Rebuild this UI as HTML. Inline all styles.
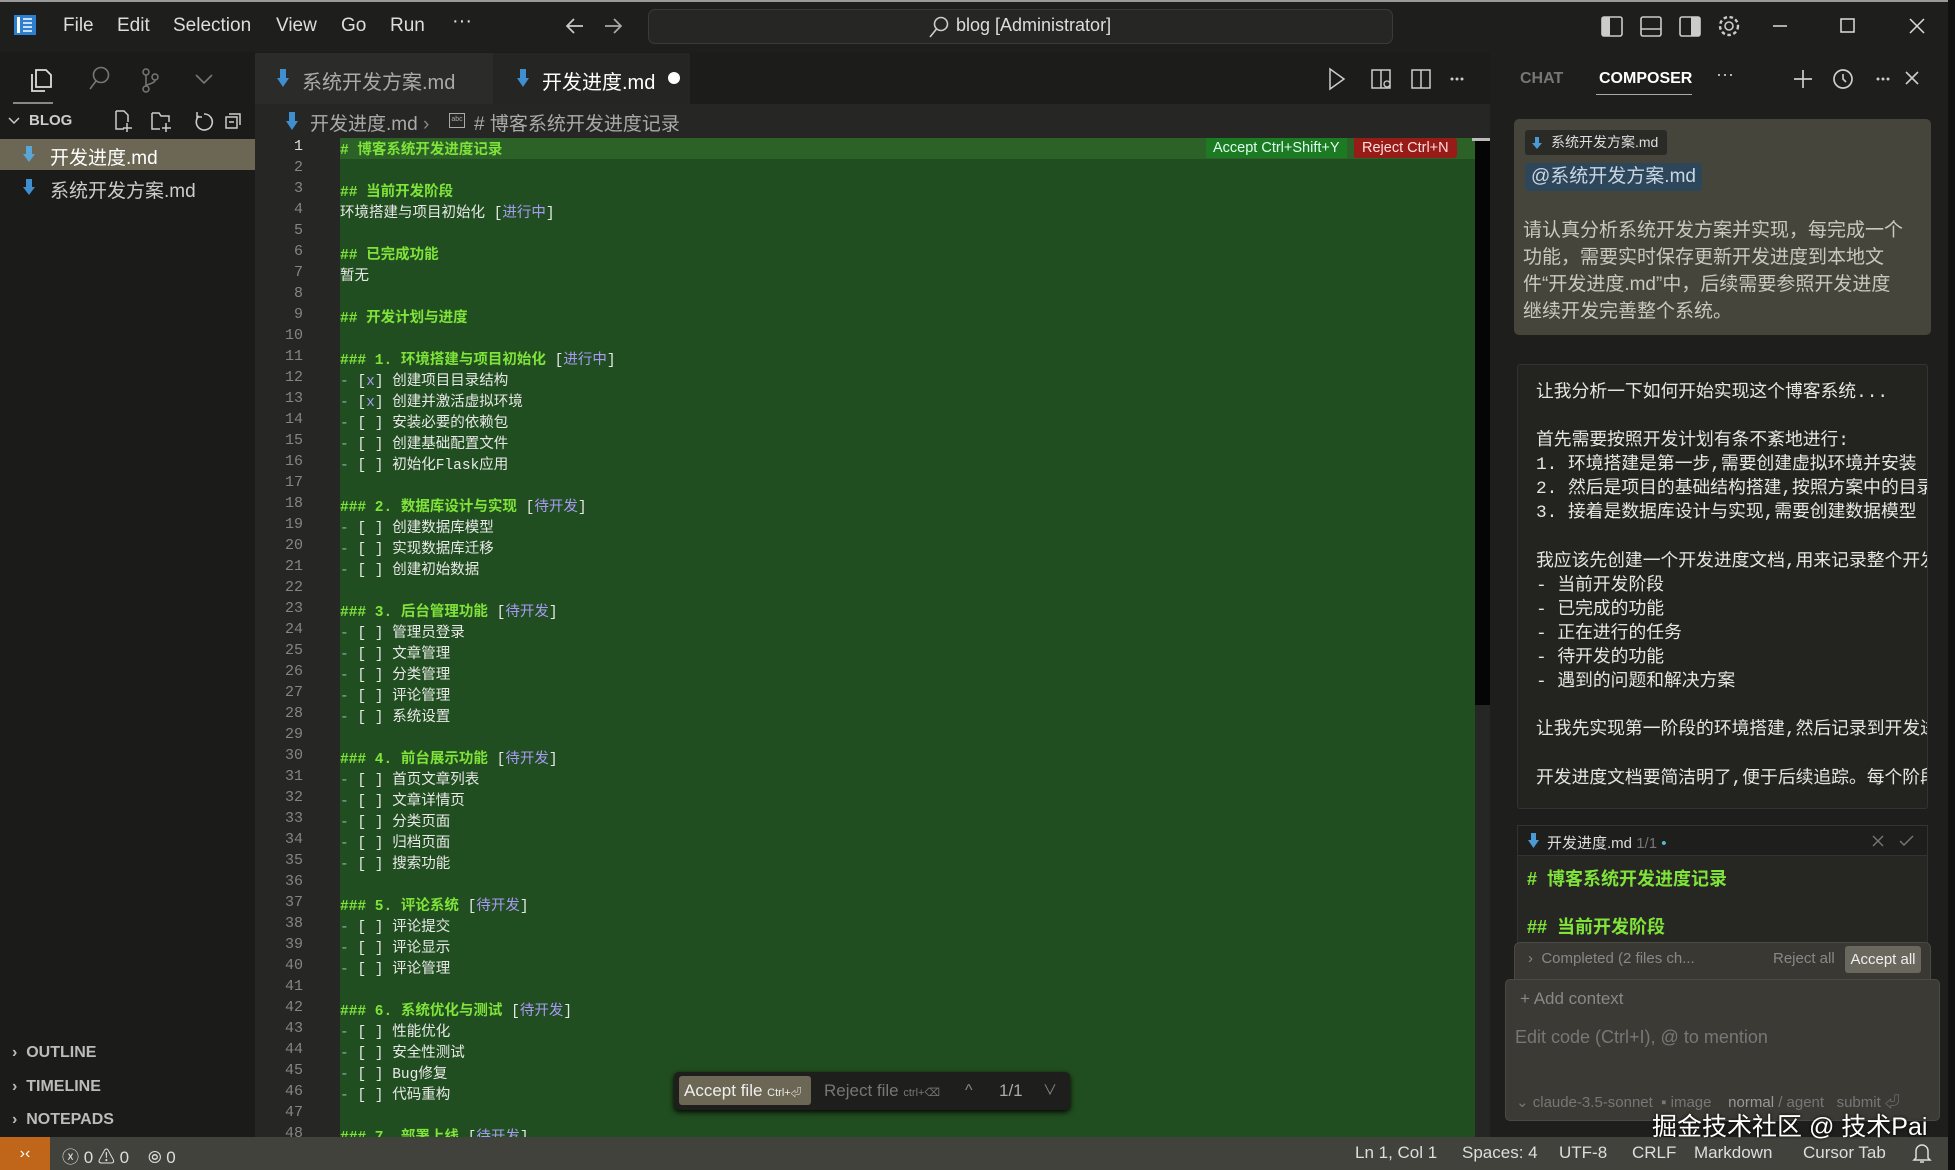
<!DOCTYPE html>
<html><head><meta charset="utf-8">
<style>
*{margin:0;padding:0;box-sizing:border-box}
body{width:1955px;height:1170px;overflow:hidden;background:#1c1c1b;font-family:"Liberation Sans","Noto Sans CJK SC",sans-serif;color:#ccc;position:relative}
.a{position:absolute}
.mono{font-family:"Liberation Mono","Noto Sans CJK SC",monospace}
.t{white-space:nowrap}
svg{position:absolute}
.ln{position:absolute;left:255px;width:48px;text-align:right;font-size:15px;color:#858585;font-family:"Liberation Mono",monospace}
.cl{position:absolute;left:340px;font-size:14.5px;color:#e8e8e8;white-space:nowrap;font-family:"Liberation Mono","Noto Sans CJK SC",monospace}
.h{color:#7fe33a;font-weight:bold}
.p{color:#a99bf5}
.g{color:#9aa}
</style></head><body>
<div class="a" style="left:0;top:0;width:1955px;height:2px;background:#9a9a9a"></div>
<div class="a" style="left:0;top:2px;width:1955px;height:50px;background:#1e1e1d"></div>
<svg style="left:12px;top:13px" width="26" height="24"><rect x="2" y="2" width="22" height="20" fill="#2d7fd0"/><rect x="5" y="4" width="3" height="16" fill="#fff"/><path d="M11 6h9M11 10h9M11 14h9M11 18h9" stroke="#fff" stroke-width="1.6"/></svg>
<div class="a t" style="left:63px;top:15px;font-size:19px;color:#ddd">File</div>
<div class="a t" style="left:117px;top:15px;font-size:19px;color:#ddd">Edit</div>
<div class="a t" style="left:173px;top:15px;font-size:19px;color:#ddd">Selection</div>
<div class="a t" style="left:276px;top:15px;font-size:19px;color:#ddd">View</div>
<div class="a t" style="left:341px;top:15px;font-size:19px;color:#ddd">Go</div>
<div class="a t" style="left:390px;top:15px;font-size:19px;color:#ddd">Run</div>
<div class="a t" style="left:452px;top:10px;font-size:20px;color:#ddd">···</div>
<svg style="left:563px;top:14px" width="70" height="24"><path d="M20 12H4M11 5 4 12l7 7" stroke="#ccc" stroke-width="1.7" fill="none"/><path d="M42 12h16M51 5l7 7-7 7" stroke="#aaa" stroke-width="1.7" fill="none"/></svg>
<div class="a" style="left:648px;top:9px;width:745px;height:35px;border:1px solid #3a3a3a;border-radius:7px;background:#262624"></div>
<svg style="left:928px;top:15px" width="22" height="24"><circle cx="13" cy="9" r="6.5" stroke="#ccc" stroke-width="1.6" fill="none"/><path d="M8.5 14 2 22" stroke="#ccc" stroke-width="1.6"/></svg>
<div class="a t" style="left:956px;top:15px;font-size:18px;color:#ddd">blog [Administrator]</div>
<svg style="left:1600px;top:14px" width="230" height="26"><rect x="2" y="3" width="20" height="19" rx="2" stroke="#ccc" stroke-width="1.6" fill="none"/><rect x="2" y="3" width="8" height="19" fill="#ccc"/><rect x="41" y="3" width="20" height="19" rx="2" stroke="#ccc" stroke-width="1.6" fill="none"/><path d="M41 15h20" stroke="#ccc" stroke-width="1.6"/><rect x="80" y="3" width="20" height="19" rx="2" stroke="#ccc" stroke-width="1.6" fill="none"/><rect x="91" y="3" width="9" height="19" fill="#ccc"/><circle cx="129" cy="12" r="4" stroke="#ccc" stroke-width="1.6" fill="none"/><circle cx="129" cy="12" r="9" stroke="#ccc" stroke-width="2.4" stroke-dasharray="3.5 2.6" fill="none"/></svg>
<svg style="left:1770px;top:14px" width="180" height="26"><path d="M3 12h14" stroke="#ddd" stroke-width="1.5"/><rect x="71" y="5" width="13" height="13" stroke="#ddd" stroke-width="1.5" fill="none"/><path d="M140 5l14 14M154 5l-14 14" stroke="#ddd" stroke-width="1.5"/></svg>

<div class="a" style="left:0;top:52px;width:255px;height:1085px;background:#1b1b1a"></div>
<svg style="left:28px;top:64px" width="200" height="32"><path d="M8 6h10l5 5v12H8z" stroke="#ddd" stroke-width="1.8" fill="none"/><path d="M4 10v17h13" stroke="#ddd" stroke-width="1.8" fill="none"/><circle cx="73" cy="11" r="7.5" stroke="#777" stroke-width="1.6" fill="none"/><path d="M68 17l-6 8" stroke="#777" stroke-width="1.6"/><circle cx="118" cy="8" r="3" stroke="#777" stroke-width="1.5" fill="none"/><circle cx="118" cy="25" r="3" stroke="#777" stroke-width="1.5" fill="none"/><circle cx="127" cy="13" r="3" stroke="#777" stroke-width="1.5" fill="none"/><path d="M118 11v11M127 16c0 4-9 4-9 6" stroke="#777" stroke-width="1.5" fill="none"/><path d="M168 11l8 8 8-8" stroke="#777" stroke-width="1.6" fill="none"/></svg>
<div class="a" style="left:13px;top:102px;width:40px;height:2px;background:#888"></div>
<svg style="left:6px;top:113px" width="16" height="16"><path d="M3 5l5 5 5-5" stroke="#ccc" stroke-width="1.5" fill="none"/></svg>
<div class="a t" style="left:29px;top:112px;font-size:15px;font-weight:bold;color:#ccc">BLOG</div>
<svg style="left:112px;top:108px" width="135" height="26"><path d="M4 3h8l4 4v7M4 3v18h8" stroke="#ccc" stroke-width="1.5" fill="none"/><path d="M15 15v9M11 20h9" stroke="#ccc" stroke-width="1.5"/><path d="M40 5h7l2 3h8v6M40 5v16h8" stroke="#ccc" stroke-width="1.5" fill="none"/><path d="M54 15v9M50 20h9" stroke="#ccc" stroke-width="1.5"/><path d="M92 6a8 8 0 1 1-5 2" stroke="#ccc" stroke-width="1.6" fill="none"/><path d="M85 4v5h5" stroke="#ccc" stroke-width="1.5" fill="none"/><rect x="114" y="9" width="11" height="11" stroke="#ccc" stroke-width="1.5" fill="none"/><path d="M117 6h11v11M117 14h5" stroke="#ccc" stroke-width="1.5" fill="none"/></svg>
<div class="a" style="left:0;top:139px;width:255px;height:31px;background:#6b6754"></div>
<svg style="left:22px;top:145px" width="14" height="18"><path d="M4 1h6v8h3L7 17 1 9h3z" fill="#5aa6d6"/></svg>
<div class="a t" style="left:50px;top:143px;font-size:19px;color:#fff">开发进度.md</div>
<svg style="left:22px;top:178px" width="14" height="18"><path d="M4 1h6v8h3L7 17 1 9h3z" fill="#3f8fd0"/></svg>
<div class="a t" style="left:50px;top:176px;font-size:19px;color:#ccc">系统开发方案.md</div>
<div class="a t" style="left:12px;top:1044px;font-size:16px;font-weight:bold;color:#bbb">›&nbsp; OUTLINE</div>
<div class="a t" style="left:12px;top:1078px;font-size:16px;font-weight:bold;color:#bbb">›&nbsp; TIMELINE</div>
<div class="a t" style="left:12px;top:1111px;font-size:16px;font-weight:bold;color:#bbb">›&nbsp; NOTEPADS</div>

<div class="a" style="left:255px;top:52px;width:1235px;height:52px;background:#1c1c1b"></div>
<div class="a" style="left:255px;top:53px;width:238px;height:52px;background:#2b2b29"></div>
<div class="a" style="left:493px;top:53px;width:197px;height:52px;background:#252523"></div>
<svg style="left:276px;top:68px" width="14" height="20"><path d="M4 1h6v9h3L7 19 1 10h3z" fill="#3f8fd0"/></svg>
<div class="a t" style="left:302px;top:66px;font-size:20px;color:#aaa">系统开发方案.md</div>
<svg style="left:516px;top:68px" width="14" height="20"><path d="M4 1h6v9h3L7 19 1 10h3z" fill="#3f8fd0"/></svg>
<div class="a t" style="left:542px;top:66px;font-size:20px;color:#fff">开发进度.md</div>
<div class="a" style="left:668px;top:72px;width:12px;height:12px;border-radius:50%;background:#fff"></div>
<svg style="left:1325px;top:66px" width="160" height="26"><path d="M5 3l14 10-14 10z" stroke="#ccc" stroke-width="1.5" fill="none"/><rect x="47" y="4" width="18" height="18" stroke="#ccc" stroke-width="1.5" fill="none"/><path d="M56 4v18" stroke="#ccc" stroke-width="1.5"/><circle cx="62" cy="18" r="3" stroke="#ccc" stroke-width="1.3" fill="#1c1c1b"/><rect x="87" y="4" width="18" height="18" stroke="#ccc" stroke-width="1.5" fill="none"/><path d="M96 4v18" stroke="#ccc" stroke-width="1.5"/><circle cx="127" cy="13" r="1.5" fill="#ccc"/><circle cx="132" cy="13" r="1.5" fill="#ccc"/><circle cx="137" cy="13" r="1.5" fill="#ccc"/></svg>
<div class="a" style="left:255px;top:104px;width:1235px;height:34px;background:#262624"></div>
<svg style="left:285px;top:111px" width="14" height="20"><path d="M4 1h6v9h3L7 19 1 10h3z" fill="#3f8fd0"/></svg>
<div class="a t" style="left:310px;top:109px;font-size:19px;color:#aaa">开发进度.md <span style="color:#888">›</span></div>
<div class="a" style="left:449px;top:113px;width:16px;height:15px;border:1.5px solid #aaa;font-size:7px;color:#aaa;line-height:11px;text-align:center">abc</div>
<div class="a t" style="left:474px;top:109px;font-size:19px;color:#aaa"># 博客系统开发进度记录</div>

<div class="a" style="left:255px;top:138px;width:85px;height:999px;background:#262624"></div>
<div class="a" style="left:340px;top:138px;width:1135px;height:999px;background:#214e20"></div>
<div class="a" style="left:340px;top:138px;width:1135px;height:21px;background:#2c6228"></div>
<div class="a" style="left:1475px;top:138px;width:15px;height:999px;background:#050505"></div>
<div class="a" style="left:1472px;top:138px;width:18px;height:3px;background:#bbb"></div>
<div class="a" style="left:1475px;top:705px;width:15px;height:432px;background:#262624"></div>
<div class="a t" style="left:1206px;top:138px;height:20px;padding:0 7px;background:#1c7a22;color:#dfe;font-size:14.5px;line-height:20px">Accept Ctrl+Shift+Y</div>
<div class="a t" style="left:1354px;top:138px;height:20px;padding:0 8px;background:#971b17;color:#fdd;font-size:14.5px;line-height:20px;border-radius:0 3px 3px 0">Reject Ctrl+N</div>

<div class="ln" style="top:138px;color:#ddd">1</div><div class="cl h" style="top:138px"># 博客系统开发进度记录</div>
<div class="ln" style="top:159px">2</div>
<div class="ln" style="top:180px">3</div><div class="cl h" style="top:180px">## 当前开发阶段</div>
<div class="ln" style="top:201px">4</div><div class="cl" style="top:201px">环境搭建与项目初始化 [<span class="p">进行中</span>]</div>
<div class="ln" style="top:222px">5</div>
<div class="ln" style="top:243px">6</div><div class="cl h" style="top:243px">## 已完成功能</div>
<div class="ln" style="top:264px">7</div><div class="cl" style="top:264px">暂无</div>
<div class="ln" style="top:285px">8</div>
<div class="ln" style="top:306px">9</div><div class="cl h" style="top:306px">## 开发计划与进度</div>
<div class="ln" style="top:327px">10</div>
<div class="ln" style="top:348px">11</div><div class="cl" style="top:348px"><span class="h">### 1. 环境搭建与项目初始化 </span>[<span class="p">进行中</span>]</div>
<div class="ln" style="top:369px">12</div><div class="cl" style="top:369px"><span class="g">-</span> [<span class="p">x</span>] 创建项目目录结构</div>
<div class="ln" style="top:390px">13</div><div class="cl" style="top:390px"><span class="g">-</span> [<span class="p">x</span>] 创建并激活虚拟环境</div>
<div class="ln" style="top:411px">14</div><div class="cl" style="top:411px"><span class="g">-</span> [ ] 安装必要的依赖包</div>
<div class="ln" style="top:432px">15</div><div class="cl" style="top:432px"><span class="g">-</span> [ ] 创建基础配置文件</div>
<div class="ln" style="top:453px">16</div><div class="cl" style="top:453px"><span class="g">-</span> [ ] 初始化Flask应用</div>
<div class="ln" style="top:474px">17</div>
<div class="ln" style="top:495px">18</div><div class="cl" style="top:495px"><span class="h">### 2. 数据库设计与实现 </span>[<span class="p">待开发</span>]</div>
<div class="ln" style="top:516px">19</div><div class="cl" style="top:516px"><span class="g">-</span> [ ] 创建数据库模型</div>
<div class="ln" style="top:537px">20</div><div class="cl" style="top:537px"><span class="g">-</span> [ ] 实现数据库迁移</div>
<div class="ln" style="top:558px">21</div><div class="cl" style="top:558px"><span class="g">-</span> [ ] 创建初始数据</div>
<div class="ln" style="top:579px">22</div>
<div class="ln" style="top:600px">23</div><div class="cl" style="top:600px"><span class="h">### 3. 后台管理功能 </span>[<span class="p">待开发</span>]</div>
<div class="ln" style="top:621px">24</div><div class="cl" style="top:621px"><span class="g">-</span> [ ] 管理员登录</div>
<div class="ln" style="top:642px">25</div><div class="cl" style="top:642px"><span class="g">-</span> [ ] 文章管理</div>
<div class="ln" style="top:663px">26</div><div class="cl" style="top:663px"><span class="g">-</span> [ ] 分类管理</div>
<div class="ln" style="top:684px">27</div><div class="cl" style="top:684px"><span class="g">-</span> [ ] 评论管理</div>
<div class="ln" style="top:705px">28</div><div class="cl" style="top:705px"><span class="g">-</span> [ ] 系统设置</div>
<div class="ln" style="top:726px">29</div>
<div class="ln" style="top:747px">30</div><div class="cl" style="top:747px"><span class="h">### 4. 前台展示功能 </span>[<span class="p">待开发</span>]</div>
<div class="ln" style="top:768px">31</div><div class="cl" style="top:768px"><span class="g">-</span> [ ] 首页文章列表</div>
<div class="ln" style="top:789px">32</div><div class="cl" style="top:789px"><span class="g">-</span> [ ] 文章详情页</div>
<div class="ln" style="top:810px">33</div><div class="cl" style="top:810px"><span class="g">-</span> [ ] 分类页面</div>
<div class="ln" style="top:831px">34</div><div class="cl" style="top:831px"><span class="g">-</span> [ ] 归档页面</div>
<div class="ln" style="top:852px">35</div><div class="cl" style="top:852px"><span class="g">-</span> [ ] 搜索功能</div>
<div class="ln" style="top:873px">36</div>
<div class="ln" style="top:894px">37</div><div class="cl" style="top:894px"><span class="h">### 5. 评论系统 </span>[<span class="p">待开发</span>]</div>
<div class="ln" style="top:915px">38</div><div class="cl" style="top:915px"><span class="g">-</span> [ ] 评论提交</div>
<div class="ln" style="top:936px">39</div><div class="cl" style="top:936px"><span class="g">-</span> [ ] 评论显示</div>
<div class="ln" style="top:957px">40</div><div class="cl" style="top:957px"><span class="g">-</span> [ ] 评论管理</div>
<div class="ln" style="top:978px">41</div>
<div class="ln" style="top:999px">42</div><div class="cl" style="top:999px"><span class="h">### 6. 系统优化与测试 </span>[<span class="p">待开发</span>]</div>
<div class="ln" style="top:1020px">43</div><div class="cl" style="top:1020px"><span class="g">-</span> [ ] 性能优化</div>
<div class="ln" style="top:1041px">44</div><div class="cl" style="top:1041px"><span class="g">-</span> [ ] 安全性测试</div>
<div class="ln" style="top:1062px">45</div><div class="cl" style="top:1062px"><span class="g">-</span> [ ] Bug修复</div>
<div class="ln" style="top:1083px">46</div><div class="cl" style="top:1083px"><span class="g">-</span> [ ] 代码重构</div>
<div class="ln" style="top:1104px">47</div>
<div class="ln" style="top:1125px">48</div><div class="cl" style="top:1125px"><span class="h">### 7. 部署上线 </span>[<span class="p">待开发</span>]</div>

<div class="a" style="left:674px;top:1072px;width:396px;height:38px;background:#1e1e1c;border-radius:5px;box-shadow:0 2px 6px #000"></div>
<div class="a t" style="left:679px;top:1076px;width:132px;height:29px;background:#6b6754;border-radius:3px;color:#eee;font-size:17px;line-height:29px;padding-left:5px">Accept file <span style="font-size:11px">Ctrl+⏎</span></div>
<div class="a t" style="left:824px;top:1076px;color:#777;font-size:17px;line-height:29px">Reject file <span style="font-size:11px">ctrl+⌫</span></div>
<div class="a t" style="left:965px;top:1076px;color:#888;font-size:16px;line-height:29px">^</div>
<div class="a t" style="left:999px;top:1076px;color:#aaa;font-size:17px;line-height:29px">1/1</div>
<div class="a t" style="left:1043px;top:1076px;color:#888;font-size:14px;line-height:29px">∨</div>

<div class="a" style="left:0;top:1137px;width:1955px;height:33px;background:#42423d"></div>
<div class="a" style="left:0;top:1137px;width:50px;height:33px;background:#c0661a;color:#fff;font-size:16px;text-align:center;line-height:33px">›‹</div>
<div class="a t" style="left:62px;top:1143px;font-size:17px;color:#ddd">ⓧ 0 ⚠ 0 &nbsp; &nbsp;⦾ 0</div>
<div class="a t" style="left:1355px;top:1143px;font-size:17px;color:#ddd">Ln 1, Col 1</div>
<div class="a t" style="left:1462px;top:1143px;font-size:17px;color:#ddd">Spaces: 4</div>
<div class="a t" style="left:1559px;top:1143px;font-size:17px;color:#ddd">UTF-8</div>
<div class="a t" style="left:1632px;top:1143px;font-size:17px;color:#ddd">CRLF</div>
<div class="a t" style="left:1694px;top:1143px;font-size:17px;color:#ddd">Markdown</div>
<div class="a t" style="left:1803px;top:1143px;font-size:17px;color:#ddd">Cursor Tab</div>
<svg style="left:1912px;top:1141px" width="20" height="24"><path d="M4 17V10a6 6 0 0 1 12 0v7l2 2H2zM8 21h4" stroke="#ddd" stroke-width="1.5" fill="none"/></svg>

<div class="a" style="left:1490px;top:52px;width:458px;height:1085px;background:#1e1e1c"></div>
<div class="a" style="left:1948px;top:0;width:7px;height:1170px;background:#111"></div>
<div class="a t" style="left:1520px;top:70px;font-size:16px;font-weight:bold;color:#777">CHAT</div>
<div class="a t" style="left:1599px;top:70px;font-size:16px;font-weight:bold;color:#fff">COMPOSER</div>
<div class="a" style="left:1596px;top:94px;width:96px;height:1px;background:#aaa"></div>
<div class="a t" style="left:1716px;top:64px;font-size:18px;color:#ccc">···</div>
<svg style="left:1790px;top:66px" width="130" height="26"><path d="M13 4v18M4 13h18" stroke="#ccc" stroke-width="1.7"/><circle cx="53" cy="13" r="9" stroke="#ccc" stroke-width="1.7" fill="none"/><path d="M53 8v5l3 3" stroke="#ccc" stroke-width="1.6" fill="none"/><circle cx="88" cy="13" r="1.5" fill="#ccc"/><circle cx="93" cy="13" r="1.5" fill="#ccc"/><circle cx="98" cy="13" r="1.5" fill="#ccc"/><path d="M116 6l12 12M128 6l-12 12" stroke="#ccc" stroke-width="1.6"/></svg>
<div class="a" style="left:1514px;top:119px;width:417px;height:216px;background:#46453b;border-radius:5px"></div>
<div class="a t" style="left:1525px;top:130px;height:25px;padding:0 9px 0 26px;background:#2a2a26;border-radius:3px;font-size:14px;color:#ddd;line-height:25px">系统开发方案.md</div>
<svg style="left:1532px;top:137px" width="10" height="12"><path d="M3 0h4v6h3L5 12 0 6h3z" fill="#4a9ad6"/></svg>
<div class="a t" style="left:1525px;top:163px;height:28px;padding:0 6px;background:#2e465a;border-radius:3px;font-size:19px;color:#c7d6e3;line-height:28px">@系统开发方案.md</div>
<div class="a" style="left:1523px;top:217px;width:386px;font-size:19px;line-height:27px;color:#c8c8bf">请认真分析系统开发方案并实现，每完成一个功能，需要实时保存更新开发进度到本地文件“开发进度.md”中，后续需要参照开发进度继续开发完善整个系统。</div>
<div class="a" style="left:1517px;top:364px;width:411px;height:445px;background:#232320;border:1px solid #333;border-radius:3px;overflow:hidden">
<div class="mono" style="position:absolute;left:18px;top:16px;font-size:17.8px;line-height:24.1px;color:#e6e6e0;white-space:pre">让我分析一下如何开始实现这个博客系统...

首先需要按照开发计划有条不紊地进行:
1. 环境搭建是第一步,需要创建虚拟环境并安装
2. 然后是项目的基础结构搭建,按照方案中的目录
3. 接着是数据库设计与实现,需要创建数据模型

我应该先创建一个开发进度文档,用来记录整个开发
- 当前开发阶段
- 已完成的功能
- 正在进行的任务
- 待开发的功能
- 遇到的问题和解决方案

让我先实现第一阶段的环境搭建,然后记录到开发进度

开发进度文档要简洁明了,便于后续追踪。每个阶段</div>
</div>
<div class="a" style="left:1517px;top:825px;width:411px;height:130px;background:#262622;border:1px solid #333"></div>
<div class="a" style="left:1518px;top:826px;width:409px;height:30px;background:#1e1e1c;border-bottom:1px solid #333"></div>
<svg style="left:1528px;top:833px" width="12" height="16"><path d="M3 0h5v7h3L5.5 15 0 7h3z" fill="#4a9ad6"/></svg>
<div class="a t" style="left:1547px;top:832px;font-size:15px;color:#ddd">开发进度.md <span style="color:#777">1/1</span> <span style="color:#5bc">•</span></div>
<svg style="left:1870px;top:832px" width="50" height="18"><path d="M3 4l10 10M13 4 3 14" stroke="#777" stroke-width="1.4"/><path d="M30 9l4 4 9-9" stroke="#777" stroke-width="1.4" fill="none"/></svg>
<div class="a t" style="left:1527px;top:865px;font-size:18px;font-weight:bold;color:#7fe33a">#&nbsp; 博客系统开发进度记录</div>
<div class="a t" style="left:1527px;top:913px;font-size:18px;font-weight:bold;color:#7fe33a">##&nbsp; 当前开发阶段</div>
<div class="a" style="left:1514px;top:942px;width:417px;height:40px;background:#393833;border-radius:6px 6px 0 0;border:1px solid #4a4a44"></div>
<div class="a t" style="left:1528px;top:950px;font-size:15px;color:#888">›&nbsp; Completed (2 files ch...</div>
<div class="a t" style="left:1773px;top:950px;font-size:15px;color:#888">Reject all</div>
<div class="a t" style="left:1845px;top:946px;width:76px;height:27px;background:#6a685e;border-radius:3px;font-size:15px;color:#eee;line-height:27px;text-align:center">Accept all</div>
<div class="a" style="left:1505px;top:979px;width:435px;height:142px;background:#3b3a34;border:1px solid #4a4a44;border-radius:5px"></div>
<div class="a t" style="left:1520px;top:989px;font-size:17px;color:#888">+ Add context</div>
<div class="a t" style="left:1515px;top:1027px;font-size:18px;color:#777">Edit code (Ctrl+I), @ to mention</div>
<div class="a t" style="left:1516px;top:1091px;font-size:15px;color:#777">⌄ claude-3.5-sonnet &nbsp;▪ image &nbsp;&nbsp; <span style="color:#999">normal</span> / agent &nbsp; submit ⏎</div>
<div class="a t" style="left:1652px;top:1107px;font-size:25px;color:#fff;text-shadow:0 0 3px #000">掘金技术社区 @ 技术Pai</div>
</body></html>
